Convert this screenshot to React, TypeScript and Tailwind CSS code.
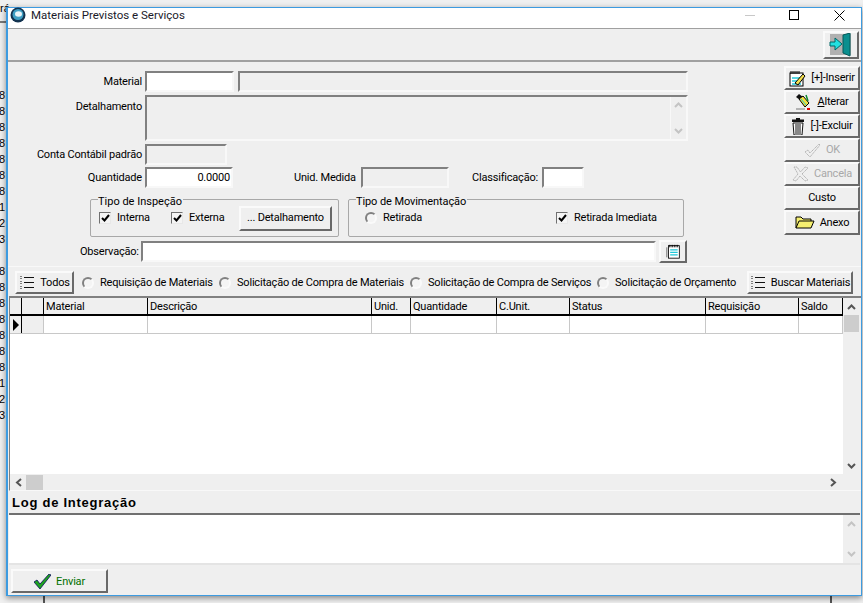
import React from "react";

const font = "font-['Roboto','Liberation_Sans',Arial,sans-serif]";
const sunken = "border-2 border-t-[#808080] border-l-[#808080] border-r-[#f8f8f8] border-b-[#f8f8f8]";
const raised = "border-2 border-t-[#fafafa] border-l-[#fafafa] border-r-[#696969] border-b-[#696969] bg-[#efefef]";

const LogoIcon = () => (
  <svg width="16" height="16" viewBox="0 0 16 16" className="shrink-0">
    <circle cx="8" cy="8" r="7.5" fill="#12324f" />
    <circle cx="8" cy="7.5" r="5.5" fill="#3f9fc4" />
    <ellipse cx="8.5" cy="7" rx="3.5" ry="2.8" fill="#e8f4f8" />
  </svg>
);

const ExitIcon = () => (
  <svg width="24" height="24" viewBox="0 0 24 24">
    <rect x="1" y="1" width="21" height="21" fill="#b0b0b0" />
    <path d="M14 2 L21 0 V23 L14 20 Z" fill="#0a8f8f" stroke="#045a5a" strokeWidth="1" />
    <path d="M1 9 H6 V5 L13 11 L6 17 V13 H1 Z" fill="#22e0e0" stroke="#066" strokeWidth="1" />
  </svg>
);

const NoteIcon = ({ size = 18 }: { size?: number }) => (
  <svg width={size} height={size} viewBox="0 0 18 18">
    <rect x="3" y="2" width="13" height="15" fill="#fff" stroke="#000" />
    <path d="M4 1v3M6 1v3M8 1v3M10 1v3M12 1v3M14 1v3" stroke="#000" />
    <path d="M5 7h9M5 10h9M5 13h9" stroke="#20c8d8" strokeWidth="1.5" />
    <path d="M1 4v12" stroke="#555" />
  </svg>
);

const InsertIcon = () => (
  <svg width="17" height="17" viewBox="0 0 17 17">
    <rect x="1" y="3" width="13" height="13" fill="#fff" stroke="#000" />
    <path d="M2 1v3M4 1v3M6 1v3M8 1v3M10 1v3" stroke="#000" />
    <path d="M3 8h9M3 11h9M3 14h9" stroke="#20c8d8" strokeWidth="1.5" />
    <path d="M6 13 L14 4 L16 6 L9 15 Z" fill="#f5e050" stroke="#000" />
  </svg>
);

const EditIcon = () => (
  <svg width="17" height="17" viewBox="0 0 17 17">
    <path d="M1 3 L4 0 L8 3 L5 6 Z" fill="#111" />
    <path d="M4 5 L8 2 L14 9 L10 13 Z" fill="#f0e040" stroke="#000" />
    <path d="M6 5l5 6" stroke="#20c8d8" />
    <path d="M11 1 L13 7" stroke="#0a8a2a" strokeWidth="1.5" />
    <path d="M1 15h9" stroke="#777" />
    <rect x="12" y="14" width="3" height="2" fill="#e00000" />
  </svg>
);

const TrashIcon = () => (
  <svg width="14" height="17" viewBox="0 0 14 17">
    <path d="M5 0h4v1.5h4V4H1V1.5h4Z" fill="#111" />
    <path d="M2 5h10l-1 12H3Z" fill="#fff" stroke="#111" />
    <path d="M5 6v10M7 6v10M9 6v10" stroke="#111" />
  </svg>
);

const CheckGhost = () => (
  <svg width="17" height="15" viewBox="0 0 17 15" fill="none">
    <path d="M1 9 L4 7 L6 10 L15 1 L16 2 L6 14 Z" stroke="#b4b4b4" strokeDasharray="1.5 0.5" />
  </svg>
);

const CrossGhost = () => (
  <svg width="17" height="16" viewBox="0 0 17 16" fill="none">
    <path d="M2 1 L5 1 L8.5 6 L13 1 L16 2 L10 8 L16 14 L13 15 L8 10 L4 15 L1 14 L6 8 Z" stroke="#b4b4b4" strokeDasharray="1.5 0.5" />
  </svg>
);

const FolderIcon = () => (
  <svg width="20" height="13" viewBox="0 0 20 13">
    <path d="M1 12 V1 H6 L8 3 H16 V5" fill="#f5ef70" stroke="#000" />
    <path d="M1 12 L4 5 H19 L16 12 Z" fill="#f5ef70" stroke="#000" />
  </svg>
);

const ListIcon = () => (
  <svg width="16" height="13" viewBox="0 0 16 13" className="shrink-0">
    <path d="M5 1.5h10M5 6.5h10M5 11.5h10" stroke="#111" />
    <path d="M2 0v3M2 5v3M2 10v3" stroke="#111" strokeDasharray="1 1" />
  </svg>
);

const SendCheck = () => (
  <svg width="17" height="15" viewBox="0 0 17 15">
    <path d="M0 8 L3 6 L6 10 L15 0 L17 1 L6 15 Z" fill="#1fa31f" stroke="#0a0a60" strokeWidth="0.8" />
  </svg>
);

const Check = ({ label, className = "" }: { label: string; className?: string }) => (
  <div className={`flex items-center gap-[6px] whitespace-nowrap ${className}`}>
    <span className="flex h-[12px] w-[12px] items-center justify-center border border-t-[#707070] border-l-[#707070] border-r-[#e8e8e8] border-b-[#e8e8e8] bg-[#f4f4f4]">
      <svg width="9" height="8" viewBox="0 0 9 8">
        <path d="M1 4 L3.5 6.5 L8 1" fill="none" stroke="#000" strokeWidth="2" />
      </svg>
    </span>
    <span>{label}</span>
  </div>
);

const Radio = ({ label, className = "" }: { label: string; className?: string }) => (
  <div className={`flex items-center gap-[6px] whitespace-nowrap ${className}`}>
    <span className="h-[12px] w-[12px] shrink-0 rounded-full border-2 border-t-[#808080] border-l-[#808080] border-r-[#fafafa] border-b-[#fafafa] bg-[#f4f4f4]" />
    <span>{label}</span>
  </div>
);

const Field = ({ className = "", children }: { className?: string; children?: React.ReactNode }) => (
  <div className={`${sunken} ${className}`}>{children}</div>
);

const SideButton = ({ icon, label, disabled, className = "h-[24px]" }: { icon?: React.ReactNode; label: React.ReactNode; disabled?: boolean; className?: string }) => (
  <button className={`${raised} flex w-[76px] items-center justify-center gap-[5px] whitespace-nowrap ${className} ${disabled ? "text-[#a8a8a8]" : ""}`}>
    {icon}
    <span>{label}</span>
  </button>
);

const columns = [
  { w: "w-[12px]", name: "" },
  { w: "w-[22px]", name: "" },
  { w: "w-[104px]", name: "Material" },
  { w: "w-[224px]", name: "Descrição" },
  { w: "w-[39px]", name: "Unid." },
  { w: "w-[86px]", name: "Quantidade" },
  { w: "w-[73px]", name: "C.Unit." },
  { w: "w-[136px]", name: "Status" },
  { w: "w-[93px]", name: "Requisição" },
  { w: "w-[44px]", name: "Saldo" },
];

const strip = ["8", "8", "8", "8", "8", "8", "8", "1", "2", "3", "", "8", "8", "8", "8", "8", "8", "8", "1", "2", "3"];

export default function App() {
  return (
    <div className={`relative h-[603px] w-[863px] overflow-hidden bg-[#f0f0f0] text-[11px] leading-[14px] tracking-[-0.2px] text-black ${font}`}>
      {/* janela de tras */}
      <div className="h-[23px] w-[6px] border-b-2 border-[#777] pt-[1px] font-['Liberation_Sans',sans-serif] text-[11px] tracking-normal whitespace-nowrap">rá</div>
      <div className="mt-[64px] flex flex-col font-['Liberation_Sans',sans-serif] text-[11px] leading-[16px]">
        {strip.map((n, i) => (
          <div key={i} className="h-[16px] -ml-[1px]">{n}</div>
        ))}
      </div>
      <div className="absolute left-[43px] top-[596px] h-[7px] w-[2px] bg-[#555]" />
      <div className="absolute left-[830px] top-[596px] h-[7px] w-[2px] bg-[#555]" />

      {/* janela */}
      <div className="absolute left-[6px] top-[7px] flex h-[589px] w-[856px] flex-col border border-l-2 border-[#3d9be0] bg-[#efefef] shadow-[0_2px_6px_rgba(0,0,0,0.45)]">
        {/* titulo */}
        <div className="flex h-[21px] shrink-0 items-center border-b border-[#a0a0a0] bg-white pb-[6px] pl-[2px]">
          <LogoIcon />
          <span className="ml-[5px] text-[11.5px] tracking-normal text-[#1a1a2a]">Materiais Previstos e Serviços</span>
          <div className="ml-auto flex items-center">
            <span className="mr-[34px] h-px w-[10px] bg-[#c8c8c8]" />
            <span className="mr-[35px] h-[10px] w-[10px] border border-black" />
            <svg width="11" height="11" viewBox="0 0 11 11" className="mr-[16px]">
              <path d="M0.5 0.5 L10.5 10.5 M10.5 0.5 L0.5 10.5" stroke="#000" />
            </svg>
          </div>
        </div>

        {/* barra */}
        <div className="flex h-[33px] shrink-0 items-center justify-end border-b-2 border-[#a0a0a0] pr-[2px]">
          <button className={`${raised} flex h-[28px] w-[36px] items-center justify-center`}>
            <ExitIcon />
          </button>
        </div>

        {/* formulario */}
        <div className="flex h-[205px] shrink-0 border-b border-[#f8f8f8]">
          <div className="flex w-[776px] flex-col pt-[9px]">
            <div className="flex h-[21px] items-center">
              <span className="w-[134px] text-right">Material</span>
              <Field className="ml-[3px] h-[21px] w-[89px] bg-white" />
              <Field className="ml-[4px] h-[21px] w-[450px]" />
            </div>
            <div className="mt-[3px] flex items-start">
              <span className="w-[134px] pt-[5px] text-right">Detalhamento</span>
              <Field className="ml-[3px] flex h-[46px] w-[543px] justify-end">
                <div className="flex w-[16px] flex-col items-center justify-between border-l border-[#f8f8f8] py-[5px]">
                  <svg width="9" height="6" viewBox="0 0 9 6"><path d="M1 5 L4.5 1.5 L8 5" fill="none" stroke="#c4c4c4" strokeWidth="2" /></svg>
                  <svg width="9" height="6" viewBox="0 0 9 6"><path d="M1 1 L4.5 4.5 L8 1" fill="none" stroke="#c4c4c4" strokeWidth="2" /></svg>
                </div>
              </Field>
            </div>
            <div className="mt-[3px] flex h-[21px] items-center">
              <span className="w-[134px] pt-[1px] text-right">Conta Contábil padrão</span>
              <Field className="ml-[3px] h-[21px] w-[82px]" />
            </div>
            <div className="mt-[2px] flex h-[21px] items-center whitespace-nowrap">
              <span className="w-[134px] pt-[1px] text-right">Quantidade</span>
              <Field className="ml-[3px] h-[21px] w-[88px] bg-white pr-[1px] text-right leading-[18px]">0.0000</Field>
              <span className="ml-[61px] w-[64px] pt-[1px]">Unid. Medida</span>
              <Field className="ml-[3px] h-[21px] w-[88px]" />
              <span className="ml-[23px] w-[66px] pt-[1px]">Classificação:</span>
              <Field className="ml-[4px] h-[21px] w-[42px] bg-white" />
            </div>
            <div className="mt-[11px] flex h-[38px]">
              <div className="relative ml-[82px] flex h-[38px] w-[249px] items-center rounded-[2px] border border-[#a8a8a8] pl-[8px]">
                <span className="absolute -top-[5px] left-[7px] bg-[#efefef] pr-[1px] tracking-normal">Tipo de Inspeção</span>
                <Check label="Interna" className="w-[72px]" />
                <Check label="Externa" className="w-[68px]" />
                <button className={`${raised} h-[25px] w-[93px] whitespace-nowrap`}>... Detalhamento</button>
              </div>
              <div className="relative ml-[9px] flex h-[38px] w-[336px] items-center rounded-[2px] border border-[#a8a8a8] pl-[16px]">
                <span className="absolute -top-[5px] left-[7px] bg-[#efefef] pr-[1px] tracking-[-0.1px]">Tipo de Movimentação</span>
                <Radio label="Retirada" className="w-[191px]" />
                <Check label="Retirada Imediata" />
              </div>
            </div>
            <div className="mt-[4px] flex h-[21px] items-center">
              <span className="ml-[72px] w-[61px] whitespace-nowrap">Observação:</span>
              <Field className="h-[21px] w-[515px] bg-white" />
              <button className={`${raised} ml-[3px] flex h-[23px] w-[28px] items-center justify-center`}>
                <NoteIcon size={15} />
              </button>
            </div>
          </div>
          <div className="flex flex-col pt-[4px]">
            <SideButton icon={<InsertIcon />} label="[+]-Inserir" />
            <SideButton icon={<EditIcon />} label={<><u>A</u>lterar</>} />
            <SideButton icon={<TrashIcon />} label="[-]-Excluir" />
            <SideButton icon={<CheckGhost />} label="OK" disabled />
            <SideButton icon={<CrossGhost />} label="Cancela" disabled />
            <SideButton label="Custo" />
            <SideButton icon={<FolderIcon />} label="Anexo" className="h-[25px]" />
          </div>
        </div>

        {/* filtros */}
        <div className="flex h-[29px] shrink-0 items-center pl-[7px] pt-[2px]">
          <button className={`${raised} flex h-[23px] w-[59px] items-center justify-center gap-[5px]`}>
            <ListIcon />
            <span>Todos</span>
          </button>
          <Radio label="Requisição de Materiais" className="ml-[8px] w-[137px]" />
          <Radio label="Solicitação de Compra de Materiais" className="w-[191px]" />
          <Radio label="Solicitação de Compra de Serviços" className="w-[187px]" />
          <Radio label="Solicitação de Orçamento" className="w-[150px]" />
          <button className={`${raised} flex h-[23px] w-[106px] items-center justify-center gap-[5px] whitespace-nowrap`}>
            <ListIcon />
            <span>Buscar Materiais</span>
          </button>
        </div>

        {/* grade */}
        <div className="ml-[1px] flex h-[178px] shrink-0 border-l border-t-2 border-[#808080]">
          <div className="flex w-[833px] flex-col bg-white">
            <div className="flex h-[18px] border-b-2 border-black bg-[#efefef]">
              {columns.map((c, i) => (
                <div key={i} className={`${c.w} border-r border-black pl-[2px] pt-[1px] leading-[16px]`}>{c.name}</div>
              ))}
            </div>
            <div className="flex h-[18px] border-b border-[#c8c8c8]">
              <div className="flex w-[12px] items-center justify-center border-r border-black bg-[#efefef]">
                <svg width="7" height="12" viewBox="0 0 7 12"><path d="M1 0 L7 6 L1 12 Z" fill="#000" /></svg>
              </div>
              <div className="w-[22px] border-r border-[#c8c8c8] bg-[#efefef]" />
              {columns.slice(2).map((c, i) => (
                <div key={i} className={`${c.w} border-r border-[#c8c8c8]`} />
              ))}
            </div>
          </div>
          <div className="flex w-[17px] flex-col items-center bg-[#efefef]">
            <svg width="9" height="6" viewBox="0 0 9 6" className="mt-[6px]"><path d="M1 5 L4.5 1.5 L8 5" fill="none" stroke="#555" strokeWidth="2" /></svg>
            <div className="mt-[5px] h-[17px] w-[15px] bg-[#cdcdcd]" />
            <svg width="9" height="6" viewBox="0 0 9 6" className="mb-[5px] mt-auto"><path d="M1 1 L4.5 4.5 L8 1" fill="none" stroke="#555" strokeWidth="2" /></svg>
          </div>
        </div>
        <div className="ml-[1px] flex h-[17px] shrink-0 items-center border-b border-l border-b-[#f8f8f8] border-l-[#808080] pl-[5px]">
          <svg width="7" height="9" viewBox="0 0 7 9"><path d="M6 1 L2 4.5 L6 8" fill="none" stroke="#555" strokeWidth="2" /></svg>
          <div className="ml-[4px] h-[15px] w-[17px] bg-[#cdcdcd]" />
          <svg width="7" height="9" viewBox="0 0 7 9" className="ml-auto mr-[24px]"><path d="M1 1 L5 4.5 L1 8" fill="none" stroke="#555" strokeWidth="2" /></svg>
        </div>

        {/* log */}
        <div className="flex h-[22px] shrink-0 items-center pl-[4px] pt-[1px] font-['Liberation_Sans',sans-serif] text-[13px] font-bold tracking-[0.75px]">Log de Integração</div>
        <div className="mx-[1px] flex h-[52px] shrink-0 justify-end border-t-2 border-b-2 border-t-[#707070] border-b-[#e4e4e4] bg-white">
          <div className="flex w-[17px] flex-col items-center justify-between bg-[#efefef] py-[6px]">
            <svg width="9" height="6" viewBox="0 0 9 6"><path d="M1 5 L4.5 1.5 L8 5" fill="none" stroke="#c4c4c4" strokeWidth="2" /></svg>
            <svg width="9" height="6" viewBox="0 0 9 6"><path d="M1 1 L4.5 4.5 L8 1" fill="none" stroke="#c4c4c4" strokeWidth="2" /></svg>
          </div>
        </div>
        <div className="pl-[3px] pt-[4px]">
          <button className={`${raised} flex h-[24px] w-[97px] items-center justify-center gap-[5px] pt-[1px] text-[#007000]`}>
            <SendCheck />
            <span>Enviar</span>
          </button>
        </div>
      </div>
    </div>
  );
}
